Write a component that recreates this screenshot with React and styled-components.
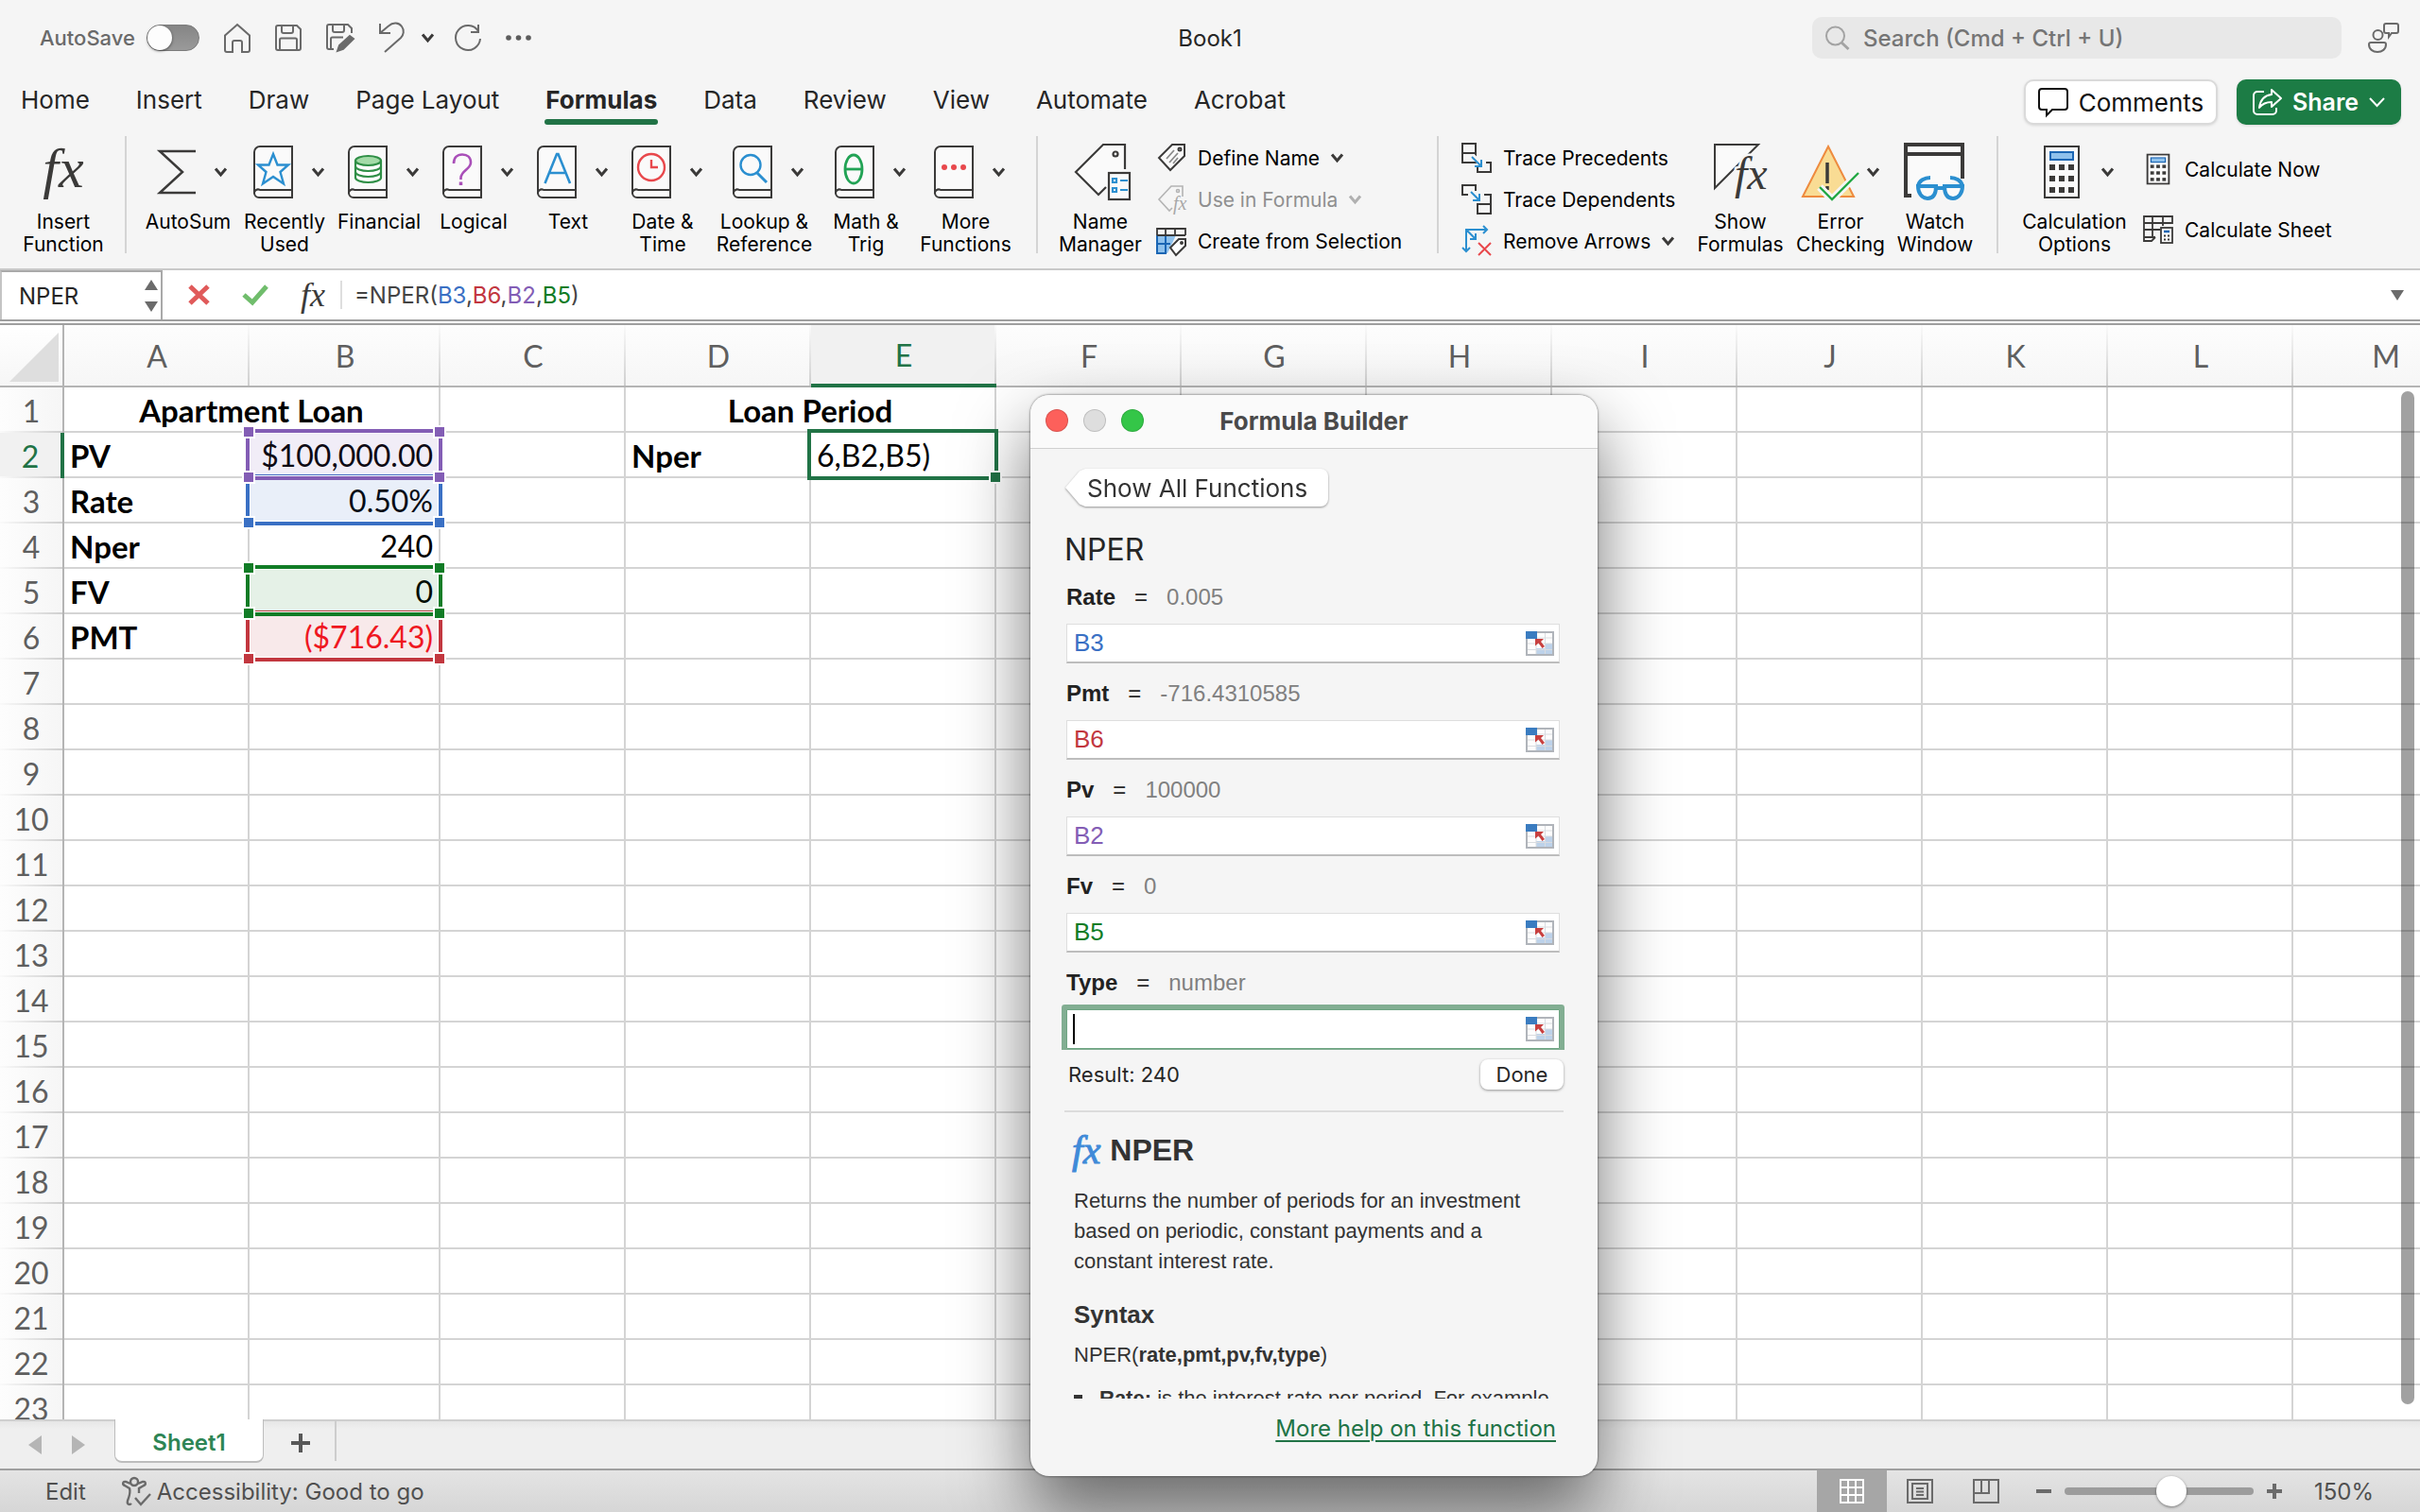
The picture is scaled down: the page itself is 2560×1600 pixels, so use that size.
import React from "react";
import styled, { createGlobalStyle, css } from "styled-components";

const ui = `Inter, "Liberation Sans", sans-serif`;
const helv = `"Liberation Sans", Arial, sans-serif`;
const cellFont = `Lato, "Liberation Sans", sans-serif`;
const green = "#217346";
const ink = "#3b3a39";
const refs = { blue: "#3a70c4", red: "#c2373f", purple: "#835db5", green: "#117c26" };

const Global = createGlobalStyle`
  *, *::before, *::after { box-sizing: border-box; }
  body { margin: 0; overflow: hidden; background: #f5f5f5; font-family: ${ui}; color: #262626; }
  button, input { font: inherit; color: inherit; margin: 0; padding: 0; border: 0; background: none; }
  button { display: flex; align-items: center; cursor: default; }
  svg { display: block; flex: none; overflow: visible; }
`;

const Page = styled.div`
  position: relative;
  height: 100vh;
  display: flex;
  flex-direction: column;
  overflow: hidden;
`;

/* ---------- title bar ---------- */
const TitleBar = styled.header`
  display: grid;
  grid-template-columns: 1fr auto 1fr;
  align-items: center;
  height: 80px;
  padding: 0 22px;
`;
const QuickAccess = styled.div`
  display: flex;
  align-items: center;
  gap: 26px;
  padding-left: 20px;
`;
const AutoSave = styled.label`
  display: flex;
  align-items: center;
  gap: 12px;
  font-size: 22px;
  font-weight: 500;
  color: #6a6a6a;
`;
const Toggle = styled.input`
  appearance: none;
  width: 56px;
  height: 28px;
  border-radius: 14px;
  background: linear-gradient(#858585, #9a9a9a);
  border: 1px solid #7b7b7b;
  &::before {
    content: "";
    display: block;
    width: 26px;
    height: 26px;
    border-radius: 50%;
    background: #fdfdfd;
    box-shadow: 0 1px 3px rgba(0, 0, 0, 0.5);
  }
`;
const MenuChevron = styled.button`
  margin: 0 -4px 0 -8px;
`;
const DocTitle = styled.h1`
  margin: 0;
  font-size: 24px;
  font-weight: 400;
`;
const TitleRight = styled.div`
  display: flex;
  align-items: center;
  justify-content: flex-end;
  gap: 28px;
`;
const SearchBox = styled.label`
  display: flex;
  align-items: center;
  gap: 14px;
  width: 560px;
  height: 44px;
  padding: 0 14px;
  border-radius: 10px;
  background: #e8e8e8;
`;
const SearchInput = styled.input`
  flex: 1;
  min-width: 0;
  font-size: 24px;
  font-weight: 500;
  &::placeholder { color: #757575; opacity: 1; }
`;

/* ---------- ribbon tabs ---------- */
const TabRow = styled.div`
  display: flex;
  justify-content: space-between;
  height: 54px;
  padding: 0 20px 0 22px;
`;
const Tabs = styled.nav`
  display: flex;
  gap: 49px;
`;
const Tab = styled.button`
  position: relative;
  align-self: flex-start;
  height: 50px;
  font-size: 26px;
  font-weight: ${(p) => (p.$active ? 700 : 400)};
  ${(p) => p.$active && css`
    &::after {
      content: "";
      position: absolute;
      inset: auto -1px -2px;
      height: 6px;
      border-radius: 3px;
      background: ${green};
    }
  `}
`;
const TabActions = styled.div`
  display: flex;
  gap: 20px;
  padding-top: 4px;
`;
const PillButton = styled.button`
  justify-content: center;
  gap: 11px;
  width: ${(p) => (p.$primary ? 174 : 205)}px;
  height: 48px;
  border-radius: 10px;
  font-size: ${(p) => (p.$primary ? 25 : 26)}px;
  font-weight: ${(p) => (p.$primary ? 600 : 400)};
  color: ${(p) => (p.$primary ? "#fff" : "#111")};
  background: ${(p) => (p.$primary ? "#1c7c45" : "#fff")};
  border: ${(p) => (p.$primary ? "0" : "2px solid #dadada")};
  box-shadow: 0 1px 3px rgba(0, 0, 0, 0.12);
`;

/* ---------- ribbon ---------- */
const Ribbon = styled.div`
  display: flex;
  align-items: flex-start;
  height: 152px;
  padding: 10px 0 0 24px;
  border-bottom: 2px solid #c9c9c9;
`;
const Group = styled.div`
  display: flex;
  gap: 14px;
`;
const Divider = styled.div`
  width: 2px;
  height: 124px;
  margin: 0 ${(p) => p.$after}px 0 ${(p) => p.$before}px;
  background: #d4d4d4;
`;
const BigButton = styled.button`
  flex-direction: column;
  justify-content: flex-start;
  gap: 5px;
  width: ${(p) => p.$w || 86}px;
  padding-top: 2px;
  font-size: 21px;
  line-height: 24px;
  color: #000;
  white-space: pre;
`;
const IconRow = styled.span`
  display: flex;
  align-items: center;
  justify-content: center;
  gap: ${(p) => p.$gap ?? 20}px;
  height: 72px;
  padding-left: ${(p) => p.$pad ?? 0}px;
  padding-bottom: ${(p) => p.$lift ?? 0}px;
`;
const CommandColumn = styled.div`
  width: ${(p) => p.$w}px;
  padding-top: ${(p) => (p.$row > 50 ? 3 : 1)}px;
  margin-left: ${(p) => p.$ml || 0}px;
`;
const Command = styled.button`
  gap: 12px;
  height: ${(p) => p.$row || 44}px;
  font-size: 21px;
  white-space: nowrap;
  color: #000;
  &:disabled { color: #8f8f8f; }
`;
const CommandIcon = styled.span`
  display: flex;
  justify-content: center;
  width: 32px;
`;
const FxMark = styled.span`
  font-family: "Liberation Serif", "Times New Roman", serif;
  font-style: italic;
  font-size: ${(p) => p.$size}px;
  font-weight: 400;
  line-height: 1;
  color: ${(p) => p.$color || ink};
  -webkit-text-stroke: ${(p) => (p.$heavy ? "1px" : "0")} currentColor;
`;

/* ---------- formula bar ---------- */
const FormulaBar = styled.div`
  display: flex;
  align-items: center;
  height: 58px;
  background: #fff;
  border-bottom: 6px double #9f9f9f;
`;
const NameBox = styled.div`
  display: flex;
  align-items: center;
  align-self: stretch;
  width: 172px;
  padding: 0 3px 0 18px;
  border: solid #a9a9a9;
  border-width: 2px 2px 0;
  border-left-color: #c4c4c4;
`;
const NameInput = styled.input`
  flex: 1;
  min-width: 0;
  font-size: 24px;
`;
const BarIcons = styled.div`
  display: flex;
  align-items: center;
  gap: 34px;
  padding-left: 27px;
`;
const BarLine = styled.div`
  width: 2px;
  height: 30px;
  margin: 0 13px 0 16px;
  background: #dedede;
`;
const FormulaText = styled.div`
  flex: 1;
  font-size: 24px;
  color: #444;
`;
const RefText = styled.span`
  color: ${(p) => refs[p.$c]};
`;
const ExpandButton = styled.button`
  padding: 0 17px;
`;

/* ---------- sheet ---------- */
const SheetArea = styled.main`
  position: relative;
  flex: 1;
  min-height: 0;
  overflow: hidden;
  background: #fff;
`;
const Grid = styled.table`
  table-layout: fixed;
  width: 2622px;
  border-collapse: separate;
  border-spacing: 0;
  font-family: ${cellFont};
  font-size: 32px;
`;
const Corner = styled.th`
  height: 66px;
  padding: 8px 4px 4px 10px;
  background: linear-gradient(#fff, #f6f6f6);
  border-right: 2px solid #b4b4b4;
  border-bottom: 2px solid #b4b4b4;
`;
const ColHead = styled.th`
  height: 66px;
  padding: 0;
  font-weight: 400;
  color: ${(p) => (p.$on ? green : "#5f5f5f")};
  background:
    linear-gradient(#fafafa, #cfcfcf) right / 2px 100% no-repeat,
    ${(p) => (p.$on ? "linear-gradient(#f1f1f1, #f1f1f1)" : "linear-gradient(#fdfdfd, #f6f6f6)")};
  border-bottom: ${(p) => (p.$on ? `4px solid ${green}` : "2px solid #b4b4b4")};
`;
const RowHead = styled.th`
  height: 48px;
  padding: 2px 0 0;
  font-weight: 400;
  line-height: 40px;
  color: ${(p) => (p.$on ? green : "#5f5f5f")};
  background:
    linear-gradient(90deg, #fafafa, #cfcfcf) bottom / 100% 2px no-repeat,
    ${(p) => (p.$on ? "linear-gradient(#f1f1f1, #f1f1f1)" : "linear-gradient(90deg, #fdfdfd, #f6f6f6)")};
  border-right: ${(p) => (p.$on ? `4px solid ${green}` : "2px solid #b4b4b4")};
`;
const Cell = styled.td`
  position: relative;
  height: 48px;
  padding: 2px 6px 0;
  line-height: 40px;
  white-space: nowrap;
  color: ${(p) => (p.$neg ? "#f5141c" : "#000")};
  font-weight: ${(p) => (p.$bold ? 700 : 400)};
  font-size: ${(p) => (p.$bold ? 33 : 32)}px;
  text-align: ${(p) => p.$align || "left"};
  border-right: 2px solid #d4d4d4;
  border-bottom: 2px solid #d4d4d4;
`;
const Range = styled.span`
  position: absolute;
  inset: -4px;
  z-index: ${(p) => p.$z};
  border: 4px solid ${(p) => refs[p.$c]};
  background: color-mix(in srgb, ${(p) => refs[p.$c]} 11%, transparent);
  box-shadow: inset 0 0 0 1px #fff;
`;
const Handle = styled.i`
  position: absolute;
  width: 10px;
  height: 10px;
  background: ${(p) => p.$color};
  box-shadow: 0 0 0 2px #fff;
  ${(p) => (p.$at[0] === "t" ? "top" : "bottom")}: -6px;
  ${(p) => (p.$at[1] === "l" ? "left" : "right")}: -6px;
`;
const ActiveBox = styled.span`
  position: absolute;
  inset: -4px;
  z-index: 3;
  border: 4px solid ${green};
`;
const ScrollThumb = styled.div`
  position: absolute;
  top: 70px;
  right: 6px;
  bottom: 16px;
  width: 14px;
  border-radius: 7px;
  background: rgba(0, 0, 0, 0.37);
`;

/* ---------- sheet tabs and status ---------- */
const SheetTabs = styled.div`
  display: flex;
  height: 52px;
  background: linear-gradient(#e4e4e4, #efefef 10px);
  box-shadow: inset 0 2px #cfcfcf;
`;
const TabArrows = styled.div`
  display: flex;
  align-items: center;
  gap: 32px;
  padding: 2px 31px 0 30px;
`;
const SheetTab = styled.button`
  justify-content: center;
  width: 158px;
  height: 46px;
  padding-top: 4px;
  border: solid #bdbdbd;
  border-width: 0 1px 2px;
  border-radius: 0 0 8px 8px;
  background: #fff;
  font-size: 24px;
  font-weight: 600;
  color: #2e8555;
`;
const AddSheet = styled.button`
  justify-content: center;
  width: 77px;
  height: 44px;
  padding: 6px 18px 0 20px;
  border-right: 2px solid #cdcdcd;
`;
const StatusBar = styled.footer`
  display: flex;
  align-items: center;
  height: 46px;
  padding: 0 48px;
  border-top: 2px solid #a0a0a0;
  background: linear-gradient(#e4e4e4, #d6d6d6);
  font-size: 24px;
  color: #505050;
`;
const A11y = styled.button`
  gap: 6px;
  margin-left: 38px;
`;
const StatusRight = styled.div`
  display: flex;
  align-items: center;
  align-self: stretch;
  margin-left: auto;
`;
const ViewButton = styled.button`
  justify-content: center;
  align-self: stretch;
  width: ${(p) => (p.$on ? 74 : 70)}px;
  background: ${(p) => (p.$on ? "#a6a6a6" : "none")};
`;
const Zoom = styled.div`
  display: flex;
  align-items: center;
  gap: 14px;
  margin-left: 18px;
`;
const ZoomSlider = styled.input`
  appearance: none;
  width: 200px;
  height: 32px;
  &::-webkit-slider-runnable-track {
    height: 8px;
    border-radius: 4px;
    background: #9c9c9c;
  }
  &::-webkit-slider-thumb {
    appearance: none;
    width: 32px;
    height: 32px;
    margin-top: -12px;
    border-radius: 50%;
    background: #fff;
    box-shadow: 0 1px 3px rgba(0, 0, 0, 0.45);
  }
`;
const ZoomValue = styled.span`
  width: 64px;
  margin-left: 34px;
  white-space: nowrap;
`;

/* ---------- formula builder window ---------- */
const Window = styled.section`
  position: absolute;
  left: 1090px;
  top: 418px;
  z-index: 10;
  display: flex;
  flex-direction: column;
  width: 600px;
  height: 1144px;
  border-radius: 20px;
  background: #f5f5f5;
  box-shadow: 0 0 2px 1px rgba(0, 0, 0, 0.3), 0 36px 76px rgba(0, 0, 0, 0.55);
`;
const WindowTitle = styled.header`
  display: grid;
  grid-template-columns: 1fr auto 1fr;
  align-items: center;
  height: 57px;
  padding: 0 16px 2px;
  border-bottom: 1px solid #d0d0d0;
  border-radius: 20px 20px 0 0;
  background: #fafafa;
`;
const Lights = styled.div`
  display: flex;
  gap: 16px;
`;
const Light = styled.button`
  width: 24px;
  height: 24px;
  border-radius: 50%;
  border: 1px solid rgba(0, 0, 0, 0.14);
  background: ${(p) => p.$c};
`;
const WindowName = styled.h2`
  margin: 0;
  font-size: 26px;
  font-weight: 700;
  color: #4a4a4a;
`;
const WindowBody = styled.div`
  flex: 1;
  min-height: 0;
  display: flex;
  flex-direction: column;
  padding: 21px 36px 0;
`;
const BackShape = styled.div`
  align-self: flex-start;
  filter: drop-shadow(0 1px 1px rgba(0, 0, 0, 0.4));
`;
const BackButton = styled.button`
  height: 40px;
  padding: 0 22px 0 24px;
  border-radius: 8px;
  background: #fff;
  clip-path: polygon(1px 50%, 16px 6%, 22px 0, 100% 0, 100% 100%, 22px 100%, 16px 94%);
  font-size: 26px;
  color: #333;
`;
const FnName = styled.h3`
  margin: 26px 0 14px;
  font-size: 32px;
  font-weight: 400;
  line-height: 40px;
`;
const Fields = styled.div`
  display: flex;
  flex-direction: column;
  gap: 16px;
  margin: 0 -6px;
  padding: 0 10px 1px 8px;
  overflow: hidden;
`;
const FieldHead = styled.div`
  display: flex;
  gap: 20px;
  height: 32px;
  margin-bottom: 12px;
  line-height: 32px;
  font-family: ${helv};
  font-size: 24px;
`;
const FieldLabel = styled.label`
  font-weight: 700;
  color: #222;
`;
const FieldValue = styled.span`
  color: #808080;
`;
const FieldBox = styled.div`
  position: relative;
  display: flex;
  align-items: center;
  height: 42px;
  padding: 0 5px 0 7px;
  background: #fff;
  border: 1px solid #dedede;
  border-bottom: 2px solid #bdbdbd;
  ${(p) => p.$focus && css`
    border: 1px solid #6fa583;
    box-shadow: 0 0 0 5px #82ae92;
    border-radius: 1px;
  `}
`;
const FieldInput = styled.input`
  flex: 1;
  min-width: 0;
  height: 100%;
  outline: none;
  font-family: ${helv};
  font-size: 26px;
  color: ${(p) => refs[p.$c] || "#222"};
`;
const Caret = styled.span`
  position: absolute;
  left: 6px;
  top: 4px;
  width: 2px;
  height: 32px;
  background: #000;
`;
const ResultRow = styled.div`
  display: flex;
  align-items: center;
  justify-content: space-between;
  margin-top: 10px;
  padding-left: 4px;
  font-size: 22px;
`;
const DoneButton = styled.button`
  justify-content: center;
  width: 88px;
  height: 32px;
  border-radius: 8px;
  background: #fff;
  box-shadow: 0 1px 3px rgba(0, 0, 0, 0.4);
`;
const Help = styled.article`
  flex: 1;
  min-height: 0;
  margin-top: 22px;
  padding: 20px 6px 0 10px;
  border-top: 2px solid #dcdcdc;
  overflow: hidden;
  font-family: ${helv};
  font-size: 22px;
  line-height: 32px;
  color: #333;
`;
const HelpTitle = styled.h4`
  display: flex;
  align-items: center;
  gap: 10px;
  height: 40px;
  margin: 0 0 18px -2px;
  font-size: 32px;
`;
const HelpText = styled.p`
  margin: 0;
`;
const HelpHeading = styled.h5`
  margin: 24px 0 11px;
  font-size: 26px;
  line-height: 32px;
`;
const HelpList = styled.ul`
  margin: 14px 0 0;
  padding: 0;
  list-style: none;
`;
const HelpItem = styled.li`
  display: flex;
  align-items: center;
  gap: 18px;
  white-space: nowrap;
  &::before {
    content: "";
    width: 9px;
    height: 9px;
    background: #333;
  }
`;
const WindowFooter = styled.footer`
  display: flex;
  justify-content: flex-end;
  height: 82px;
  padding: 16px 44px 0 0;
`;
const HelpLink = styled.a`
  height: 32px;
  font-size: 24px;
  line-height: 32px;
  color: ${green};
  text-decoration-thickness: 2px;
  text-underline-offset: 4px;
`;

/* ---------- icons ---------- */
const Svg = ({ w, h, children, c = "#6a6a6a", s = 2 }) => (
  <svg width={w} height={h} viewBox={`0 0 ${w} ${h}`} fill="none" stroke={c} strokeWidth={s} aria-hidden="true">{children}</svg>
);
const Chev = ({ c = ink }) => <Svg w={13} h={10} c={c} s={3}><path d="M1 1.5 6.5 8 12 1.5" /></Svg>;

const Book = ({ children }) => (
  <Svg w={42} h={56} c={ink}>
    <path d="M41 1H7a6 6 0 0 0-6 6v43a5 5 0 0 0 5 5h35Z" fill="#fafafa" />
    <path d="M41 47H7a4 4 0 0 0-6 4" />
    {children}
  </Svg>
);
const books = {
  star: <path d="m21 9 4.5 11.500L37 20.500l-8.500 7.500 3.500 12.500-11-7.500-11 7.500 3.500-12.500L5 20.500l11.500 0Z" stroke="#2b8fd0" strokeWidth="2.400" />,
  coins: (
    <g stroke="#2f8f46" strokeWidth="2.200">
      <path d="M8 16v18c0 2.500 6 5 13.500 5S35 36.500 35 34V16" fill="#fff" />
      <path d="M8 22c0 2.500 6 5 13.500 5S35 24.500 35 22M8 28c0 2.500 6 5 13.500 5S35 30.500 35 28" />
      <ellipse cx="21.500" cy="16" rx="13.500" ry="5" fill="#a4dba8" />
    </g>
  ),
  question: (
    <g stroke="#a94fb8" strokeWidth="2.600">
      <path d="M12 19c0-6 3.500-9.500 9-9.500s9 3 9 8.500c0 7-10 8.500-10.500 16v2" />
      <path d="M19.500 38.500v3.500" strokeWidth="3.500" />
    </g>
  ),
  letter: <path d="M8.500 40 21 9h1.500L35 40M13 29h17.500" stroke="#2b8fd0" strokeWidth="2.600" />,
  clock: <g stroke="#e8484c" strokeWidth="2.400"><circle cx="21" cy="23" r="14" /><path d="M21 15v8h7" /></g>,
  lens: <g stroke="#2b8fd0" strokeWidth="2.400"><circle cx="19" cy="20.500" r="10.500" /><path d="m26 29 10 10" strokeWidth="3" /></g>,
  theta: <g stroke="#22a355" strokeWidth="2.800"><ellipse cx="20" cy="25" rx="9" ry="15" /><path d="M11 25h18" /></g>,
  dots: <g fill="#e8484c" stroke="none"><circle cx="11" cy="23" r="3" /><circle cx="21" cy="23" r="3" /><circle cx="31" cy="23" r="3" /></g>,
};

const Sigma = () => <Svg w={40} h={50} c={ink} s={2.5}><path d="M40 3H2l24 22L2 47h38" /></Svg>;
const NameManagerIcon = () => (
  <Svg w={60} h={60} c={ink} s={2.2}>
    <path d="M53 27V1H30L1 30l24 24 8-8" fill="#fafafa" />
    <circle cx="43" cy="11" r="2.500" />
    <rect x="36" y="31" width="22" height="28" fill="#fafafa" />
    <g stroke="#2b8fd0"><path d="M40 37h4v4h-4zM48 39h8M40 47h4v4h-4zM48 49h8" /></g>
  </Svg>
);
const TagIcon = () => (
  <Svg w={31} h={30} c={ink}>
    <path d="M29 1v12L14 28 2 15 16 1Z" fill="#fafafa" />
    <circle cx="24" cy="6" r="1.500" />
    <path d="m10 16 8-9M13 20l9-10M17 21l5-6" stroke="#8a8a8a" strokeWidth="1.800" />
  </Svg>
);
const TagFxIcon = () => (
  <Svg w={31} h={32} c="#b4b4b4" s={1.6}>
    <path d="M27 13V2H15L2 16l11 12 3-3" />
    <circle cx="22" cy="7" r="1.500" />
    <text x="17" y="27" fontFamily="Liberation Serif" fontStyle="italic" fontSize="20" fill="#a8a8a8" stroke="none">fx</text>
  </Svg>
);
const CreateIcon = () => (
  <Svg w={32} h={30} c={ink}>
    <path d="M1 9h20l-9 19H1Z" fill="#8fc1ec" stroke="none" />
    <path d="M1 9v19h10M1 18h14M10 9v19M1 9h20" stroke="#1b66b4" />
    <path d="M1 9V2h30v7M10 2v7M20 2v7M1 9h30" strokeWidth="1.800" />
    <path d="M31 13v7l-10 10-6-8 9-9Z" fill="#fff" />
    <circle cx="27" cy="17" r="1" />
  </Svg>
);
const PrecedentsIcon = () => (
  <Svg w={32} h={32} c={ink}>
    <path d="M1 1h14v20H1zM1 11h14M26 21h5v10H17v-7" />
    <path d="M11 15h2l6 6" stroke="#f5f5f5" strokeWidth="5" />
    <path d="m11 15 10 10M21 18v7h-7" stroke="#2b8fd0" />
  </Svg>
);
const DependentsIcon = () => (
  <Svg w={32} h={32} c={ink}>
    <path d="M7 11H1V1h14v6M24 11h7v20H17V21h14" />
    <path d="m10 8 9 9M19 10v7h-7" stroke="#2b8fd0" />
  </Svg>
);
const RemoveArrowsIcon = () => (
  <Svg w={32} h={32} c="#2b8fd0">
    <path d="M5 27V4h22M23 0l4 4-4 4M1 23l4 4 4-4M5 4l10 10M15 8v6H9" />
    <path d="m18 18 13 13M31 18 18 31" stroke="#e8484c" />
  </Svg>
);
const ShowFormulasIcon = () => (
  <Svg w={56} h={60} c={ink}>
    <path d="M1 1h46L1 47Z" fill="#fafafa" />
    <text x="22" y="48" fontFamily="Liberation Serif" fontStyle="italic" fontSize="48" fill={ink} stroke="#f5f5f5" strokeWidth="5" paintOrder="stroke">fx</text>
  </Svg>
);
const ErrorIcon = () => (
  <Svg w={60} h={60}>
    <path d="M28 3 55 56H1Z" fill="#f9dc94" stroke="#ee8b3f" />
    <path d="M27 20v22M27 45v4" stroke={ink} strokeWidth="3.500" />
    <path d="m19 46 13 13 28-28" stroke="#f5f5f5" strokeWidth="8" />
    <path d="m19 46 13 13 28-28" stroke="#22a843" strokeWidth="2.400" />
  </Svg>
);
const WatchIcon = () => (
  <Svg w={66} h={62} c={ink} s={4}>
    <path d="M8 56H2V2h60v36" fill="#fafafa" />
    <path d="M2 12h60" />
    <path d="M4 7h56" stroke="#fafafa" strokeWidth="3" />
    <g stroke="#2b8fd0" strokeWidth="4" fill="#fafafa">
      <path d="M15 46h19c0 8-3 13-9 13s-10-6-10-13ZM43 46h19c0 7-4 13-10 13s-9-5-9-13Z" />
      <path d="M34 48h9M15 46c1-6 7-9 13-9M62 46c-1-6-7-9-13-9" fill="none" />
    </g>
  </Svg>
);
const CalcIcon = ({ w = 38, h = 56 }) => (
  <svg width={w} height={h} viewBox="0 0 38 56" preserveAspectRatio="none" fill="none" aria-hidden="true">
    <rect x="1" y="1" width="36" height="54" fill="#fafafa" stroke={ink} strokeWidth={w < 30 ? 3 : 2} />
    <rect x="7" y="7" width="24" height="8" fill="#8fc1ec" stroke="#1b66b4" strokeWidth="2" />
    {[20, 32, 44].map((y) => [6, 16, 26].map((x) => <rect key={x + "-" + y} x={x} y={y} width="6" height="6" fill={ink} />))}
  </svg>
);
const CalcSheetIcon = () => (
  <Svg w={32} h={30} c={ink} s={1.8}>
    <path d="M31 9V1H1v26h8l4-4M1 23h12M1 8h30M1 15h17M10 1v22M21 1v10" />
    <rect x="19" y="13" width="12" height="16" fill="#fafafa" />
    <path d="M22 17h6" stroke="#1b66b4" strokeWidth="2.500" />
    <path d="M22 21.500h2m2 0h2M22 25.500h2m2 0h2" strokeWidth="2.200" />
  </Svg>
);
const PickIcon = () => (
  <svg width="30" height="26" viewBox="0 0 30 26" aria-hidden="true">
    <rect width="30" height="26" fill="#fdfdfd" />
    <path d="M11 18h10v-5h9v13H11Z" fill="#bdd2ea" />
    <path d="M1 13h28M1 19.500h28M20.500 1v24M11 8v17M11 7h18" fill="none" stroke="#d9dce0" />
    <path d="M1 1h28v24H1Z" fill="none" stroke="#b0b4ba" strokeWidth="2" />
    <rect width="12" height="8" fill="#3a7cc0" />
    <path d="M10 8h9l-3 3 4 5-2.500 2-4-5.500-3.500 3Z" fill="#c8403f" />
  </svg>
);
const Tri = ({ d, w = 14, h = 11, c = "#6b6b6b" }) => (
  <svg width={w} height={h} viewBox={`0 0 ${w} ${h}`} aria-hidden="true"><path d={d} fill={c} /></svg>
);

/* ---------- data ---------- */
const tabs = ["Home", "Insert", "Draw", "Page Layout", "Formulas", "Data", "Review", "View", "Automate", "Acrobat"];
const library = [
  ["Recently\nUsed", "star"],
  ["Financial", "coins"],
  ["Logical", "question"],
  ["Text", "letter"],
  ["Date &\nTime", "clock"],
  ["Lookup &\nReference", "lens", 101],
  ["Math &\nTrig", "theta"],
  ["More\nFunctions", "dots", 97],
];
const columns = "ABCDEFGHIJKLM".split("");
const cells = {
  A1: { v: "Apartment Loan", bold: true, align: "center", span: 2 },
  D1: { v: "Loan Period", bold: true, align: "center", span: 2 },
  A2: { v: "PV", bold: true },
  A3: { v: "Rate", bold: true },
  A4: { v: "Nper", bold: true },
  A5: { v: "FV", bold: true },
  A6: { v: "PMT", bold: true },
  B2: { v: "$100,000.00", align: "right", range: "purple" },
  B3: { v: "0.50%", align: "right", range: "blue" },
  B4: { v: "240", align: "right" },
  B5: { v: "0", align: "right", range: "green" },
  B6: { v: "($716.43)", align: "right", neg: true, range: "red" },
  D2: { v: "Nper", bold: true },
  E2: { v: "6,B2,B5)", active: true },
};
const args = [
  ["Rate", "0.005", "B3", "blue"],
  ["Pmt", "-716.4310585", "B6", "red"],
  ["Pv", "100000", "B2", "purple"],
  ["Fv", "0", "B5", "green"],
  ["Type", "number", "", null],
];

function SheetRow({ n }) {
  const out = [];
  for (let i = 0; i < columns.length; i += 1) {
    const id = columns[i] + n;
    const c = cells[id] || {};
    out.push(
      <Cell key={id} colSpan={c.span} $bold={c.bold} $align={c.align} $neg={c.neg}>
        {c.range && (
          <Range $c={c.range} $z={c.range === "purple" || c.range === "green" ? 2 : 1}>
            {["tl", "tr", "bl", "br"].map((at) => <Handle key={at} $at={at} $color={refs[c.range]} />)}
          </Range>
        )}
        {c.active && <ActiveBox><Handle $at="br" $color={green} /></ActiveBox>}
        {c.v}
      </Cell>
    );
    if (c.span) i += c.span - 1;
  }
  return <tr><RowHead scope="row" $on={n === 2}>{n}</RowHead>{out}</tr>;
}

export default function App() {
  return (
    <Page>
      <Global />
      <TitleBar>
        <QuickAccess>
          <AutoSave>AutoSave<Toggle type="checkbox" role="switch" /></AutoSave>
          <button aria-label="Home"><Svg w={28} h={31}><path d="M1 12.500 14 1l13 11.500V28a2 2 0 0 1-2 2h-6V20a2 2 0 0 0-2-2h-6a2 2 0 0 0-2 2v10H3a2 2 0 0 1-2-2Z" /></Svg></button>
          <button aria-label="Save"><Svg w={28} h={28}><path d="M3 1h20l4 4v20a2 2 0 0 1-2 2H3a2 2 0 0 1-2-2V3a2 2 0 0 1 2-2ZM7 1v6a2 2 0 0 0 2 2h8a2 2 0 0 0 2-2V1M5 27V16a1.500 1.500 0 0 1 1.500-1.500h15A1.500 1.500 0 0 1 23 16v11" /></Svg></button>
          <button aria-label="Save a copy"><Svg w={30} h={30}><path d="M27 10V5l-4-4H3a2 2 0 0 0-2 2v22a2 2 0 0 0 2 2h5M7 1v6a2 2 0 0 0 2 2h8a2 2 0 0 0 2-2V1M5 27V16a1.500 1.500 0 0 1 1.500-1.500H18" /><path d="m12 29 2-6 11-10 4 3-11 11Z" fill="#6a6a6a" stroke="#6a6a6a" /></Svg></button>
          <button aria-label="Undo"><Svg w={27} h={32}><path d="M1 1v10h11M1 11 10 3.500C15-1 21 0 24 4s2 9-1 12L6 31" /></Svg></button>
          <MenuChevron aria-label="Undo options"><Chev /></MenuChevron>
          <button aria-label="Repeat"><Svg w={28} h={30}><path d="M25 1v8h-8M25 8A13 13 0 1 0 27 16" /></Svg></button>
          <button aria-label="More commands"><Svg w={27} h={6}><g fill="#5c5c5c" stroke="none"><circle cx="3" cy="3" r="2.800" /><circle cx="13.500" cy="3" r="2.800" /><circle cx="24" cy="3" r="2.800" /></g></Svg></button>
        </QuickAccess>
        <DocTitle>Book1</DocTitle>
        <TitleRight>
          <SearchBox>
            <Svg w={26} h={26} c="#a3a3a3"><circle cx="10.500" cy="11" r="9.500" /><path d="m17 18 7.500 7" strokeWidth="3" /></Svg>
            <SearchInput type="search" aria-label="Search" placeholder="Search (Cmd + Ctrl + U)" />
          </SearchBox>
          <button aria-label="Account"><Svg w={33} h={32}><circle cx="10.500" cy="13" r="5" /><path d="M3 21h14a2 2 0 0 1 2 2c0 5-4 8-9 8s-9-3-9-8a2 2 0 0 1 2-2ZM19 1h11a2 2 0 0 1 2 2v6a2 2 0 0 1-2 2h-5l-3 4v-4h-3a2 2 0 0 1-2-2V3a2 2 0 0 1 2-2Z" /></Svg></button>
        </TitleRight>
      </TitleBar>

      <TabRow>
        <Tabs>{tabs.map((t) => <Tab key={t} $active={t === "Formulas"}>{t}</Tab>)}</Tabs>
        <TabActions>
          <PillButton>
            <Svg w={32} h={30} c="#111"><path d="M4 1h24a3 3 0 0 1 3 3v16a3 3 0 0 1-3 3H15l-6 6v-6H4a3 3 0 0 1-3-3V4a3 3 0 0 1 3-3Z" /></Svg>
            Comments
          </PillButton>
          <PillButton $primary>
            <Svg w={31} h={28} c="#fff"><path d="M12 3H5a4 4 0 0 0-4 4v16a4 4 0 0 0 4 4h16a4 4 0 0 0 4-4v-3M20 1l10 9-10 9v-5c-6 0-10 2-13 6 1-8 5-13 13-14Z" strokeLinejoin="round" /></Svg>
            Share
            <Svg w={17} h={10} c="#fff"><path d="m1 1 7.500 8L16 1" /></Svg>
          </PillButton>
        </TabActions>
      </TabRow>

      <Ribbon>
        <BigButton><IconRow $lift={8}><FxMark $size={60}>fx</FxMark></IconRow>{"Insert\nFunction"}</BigButton>
        <Divider $before={22} $after={20} />
        <Group>
          <BigButton $w={90}><IconRow $pad={8}><Sigma /><Chev /></IconRow>AutoSum</BigButton>
          {library.map(([name, icon, w]) => (
            <BigButton key={name} $w={w}><IconRow $pad={8}><Book>{books[icon]}</Book><Chev /></IconRow>{name}</BigButton>
          ))}
        </Group>
        <Divider $before={26} $after={22} />
        <BigButton $w={88}><IconRow $pad={6}><NameManagerIcon /></IconRow>{"Name\nManager"}</BigButton>
        <CommandColumn $w={297} $ml={15}>
          <Command><CommandIcon><TagIcon /></CommandIcon>Define Name<Chev /></Command>
          <Command disabled><CommandIcon><TagFxIcon /></CommandIcon>Use in Formula<Chev c="#b0b0b0" /></Command>
          <Command><CommandIcon><CreateIcon /></CommandIcon>Create from Selection</Command>
        </CommandColumn>
        <Divider $before={0} $after={24} />
        <CommandColumn $w={235}>
          <Command><CommandIcon><PrecedentsIcon /></CommandIcon>Trace Precedents</Command>
          <Command><CommandIcon><DependentsIcon /></CommandIcon>Trace Dependents</Command>
          <Command><CommandIcon><RemoveArrowsIcon /></CommandIcon>Remove Arrows<Chev /></Command>
        </CommandColumn>
        <CommandColumn $w={14} aria-hidden="true" />
        <Group>
          <BigButton $w={92}><IconRow><ShowFormulasIcon /></IconRow>{"Show\nFormulas"}</BigButton>
          <BigButton $w={92}><IconRow $gap={9}><ErrorIcon /><Chev /></IconRow>{"Error\nChecking"}</BigButton>
          <BigButton $w={80}><IconRow><WatchIcon /></IconRow>{"Watch\nWindow"}</BigButton>
        </Group>
        <Divider $before={25} $after={25} />
        <BigButton $w={111}><IconRow $pad={8} $gap={23}><CalcIcon /><Chev /></IconRow>{"Calculation\nOptions"}</BigButton>
        <CommandColumn $w={220} $ml={17} $row={64}>
          <Command $row={64}><CommandIcon><CalcIcon w={24} h={32} /></CommandIcon>Calculate Now</Command>
          <Command $row={64}><CommandIcon><CalcSheetIcon /></CommandIcon>Calculate Sheet</Command>
        </CommandColumn>
      </Ribbon>

      <FormulaBar>
        <NameBox>
          <NameInput aria-label="Name box" defaultValue="NPER" />
          <button aria-label="Name list"><Svg w={14} h={34}><path d="M7 0 14 11H0ZM0 23h14L7 34Z" fill="#6b6b6b" stroke="none" /></Svg></button>
        </NameBox>
        <BarIcons>
          <button aria-label="Cancel"><Svg w={23} h={22} c="#e05a5a" s={5}><path d="m2 2 19 18M21 2 2 20" /></Svg></button>
          <button aria-label="Enter"><Svg w={28} h={22} c="#70bd6c" s={5}><path d="m2 11 9 8L26 2" /></Svg></button>
          <button aria-label="Insert function"><FxMark $size={36}>fx</FxMark></button>
        </BarIcons>
        <BarLine />
        <FormulaText role="textbox" aria-label="Formula">
          =NPER(<RefText $c="blue">B3</RefText>,<RefText $c="red">B6</RefText>,<RefText $c="purple">B2</RefText>,<RefText $c="green">B5</RefText>)
        </FormulaText>
        <ExpandButton aria-label="Expand formula bar"><Tri d="M0 0h14L7 11Z" /></ExpandButton>
      </FormulaBar>

      <SheetArea>
        <Grid>
          <colgroup>
            <col style={{ width: 68 }} />
            {columns.map((c) => <col key={c} style={{ width: c === "B" ? 202 : 196 }} />)}
          </colgroup>
          <thead>
            <tr>
              <Corner><Tri w={52} h={52} d="M52 0v52H0Z" c="#dedede" /></Corner>
              {columns.map((c) => <ColHead key={c} scope="col" $on={c === "E"}>{c}</ColHead>)}
            </tr>
          </thead>
          <tbody>{Array.from({ length: 23 }, (_, i) => <SheetRow key={i} n={i + 1} />)}</tbody>
        </Grid>
        <ScrollThumb />
      </SheetArea>

      <SheetTabs>
        <TabArrows>
          <button aria-label="Previous sheet"><Tri w={14} h={20} d="M14 0v20L0 10Z" c="#b5b5b5" /></button>
          <button aria-label="Next sheet"><Tri w={14} h={20} d="M0 0v20l14-10Z" c="#b5b5b5" /></button>
        </TabArrows>
        <SheetTab>Sheet1</SheetTab>
        <AddSheet aria-label="Add sheet"><Svg w={20} h={20} c="#585858" s={4}><path d="M10 0v20M0 10h20" /></Svg></AddSheet>
      </SheetTabs>

      <StatusBar>
        Edit
        <A11y>
          <Svg w={31} h={31} s={2.4}>
            <circle cx="13" cy="5" r="4" />
            <path d="M9 7 4 5c-3-1-4 3-1 4l5 3c1 3 0 8-2 13-1 4 2 5 4 3M17 7l5-2c3-1 4 3 1 4l-5 3v5M14 22l6 7 10-11" />
          </Svg>
          Accessibility: Good to go
        </A11y>
        <StatusRight>
          <ViewButton $on aria-label="Normal view"><Svg w={26} h={26} c="#fff"><path d="M1 1h24v24H1ZM9 1v24M17 1v24M1 9h24M1 17h24" /></Svg></ViewButton>
          <ViewButton aria-label="Page layout view"><Svg w={28} h={26}><path d="M1 1h26v24H1ZM6 5h16v16H6ZM10 10h8M10 13.500h8M10 17h8" /></Svg></ViewButton>
          <ViewButton aria-label="Page break view"><Svg w={28} h={26}><path d="M1 1h26v24H1ZM9 1v14M17 1v14H1" /></Svg></ViewButton>
          <Zoom>
            <button aria-label="Zoom out"><Svg w={16} h={16} s={4}><path d="M0 8h16" /></Svg></button>
            <ZoomSlider type="range" aria-label="Zoom" min="0" max="100" defaultValue="58" />
            <button aria-label="Zoom in"><Svg w={16} h={16} s={4}><path d="M0 8h16M8 0v16" /></Svg></button>
          </Zoom>
          <ZoomValue>150%</ZoomValue>
        </StatusRight>
      </StatusBar>

      <Window aria-label="Formula Builder">
        <WindowTitle>
          <Lights>
            <Light aria-label="Close" $c="#fd605b" />
            <Light aria-label="Minimise" $c="#dedede" />
            <Light aria-label="Zoom window" $c="#34c648" />
          </Lights>
          <WindowName>Formula Builder</WindowName>
        </WindowTitle>
        <WindowBody>
          <BackShape><BackButton>Show All Functions</BackButton></BackShape>
          <FnName>NPER</FnName>
          <Fields>
            {args.map(([name, value, ref, color]) => (
              <div key={name}>
                <FieldHead>
                  <FieldLabel htmlFor={`arg-${name}`}>{name}</FieldLabel>
                  <span>=</span>
                  <FieldValue>{value}</FieldValue>
                </FieldHead>
                <FieldBox $focus={name === "Type"}>
                  {name === "Type" && <Caret />}
                  <FieldInput id={`arg-${name}`} defaultValue={ref} $c={color} />
                  <button aria-label={`Select range for ${name}`}><PickIcon /></button>
                </FieldBox>
              </div>
            ))}
          </Fields>
          <ResultRow><span>Result: 240</span><DoneButton>Done</DoneButton></ResultRow>
          <Help>
            <HelpTitle><FxMark $size={42} $heavy $color="#3f8ad8">fx</FxMark>NPER</HelpTitle>
            <HelpText>Returns the number of periods for an investment based on periodic, constant payments and a constant interest rate.</HelpText>
            <HelpHeading>Syntax</HelpHeading>
            <HelpText>NPER(<b>rate,pmt,pv,fv,type</b>)</HelpText>
            <HelpList><HelpItem><span><b>Rate:</b> is the interest rate per period. For example</span></HelpItem></HelpList>
          </Help>
        </WindowBody>
        <WindowFooter><HelpLink href="#help">More help on this function</HelpLink></WindowFooter>
      </Window>
    </Page>
  );
}
